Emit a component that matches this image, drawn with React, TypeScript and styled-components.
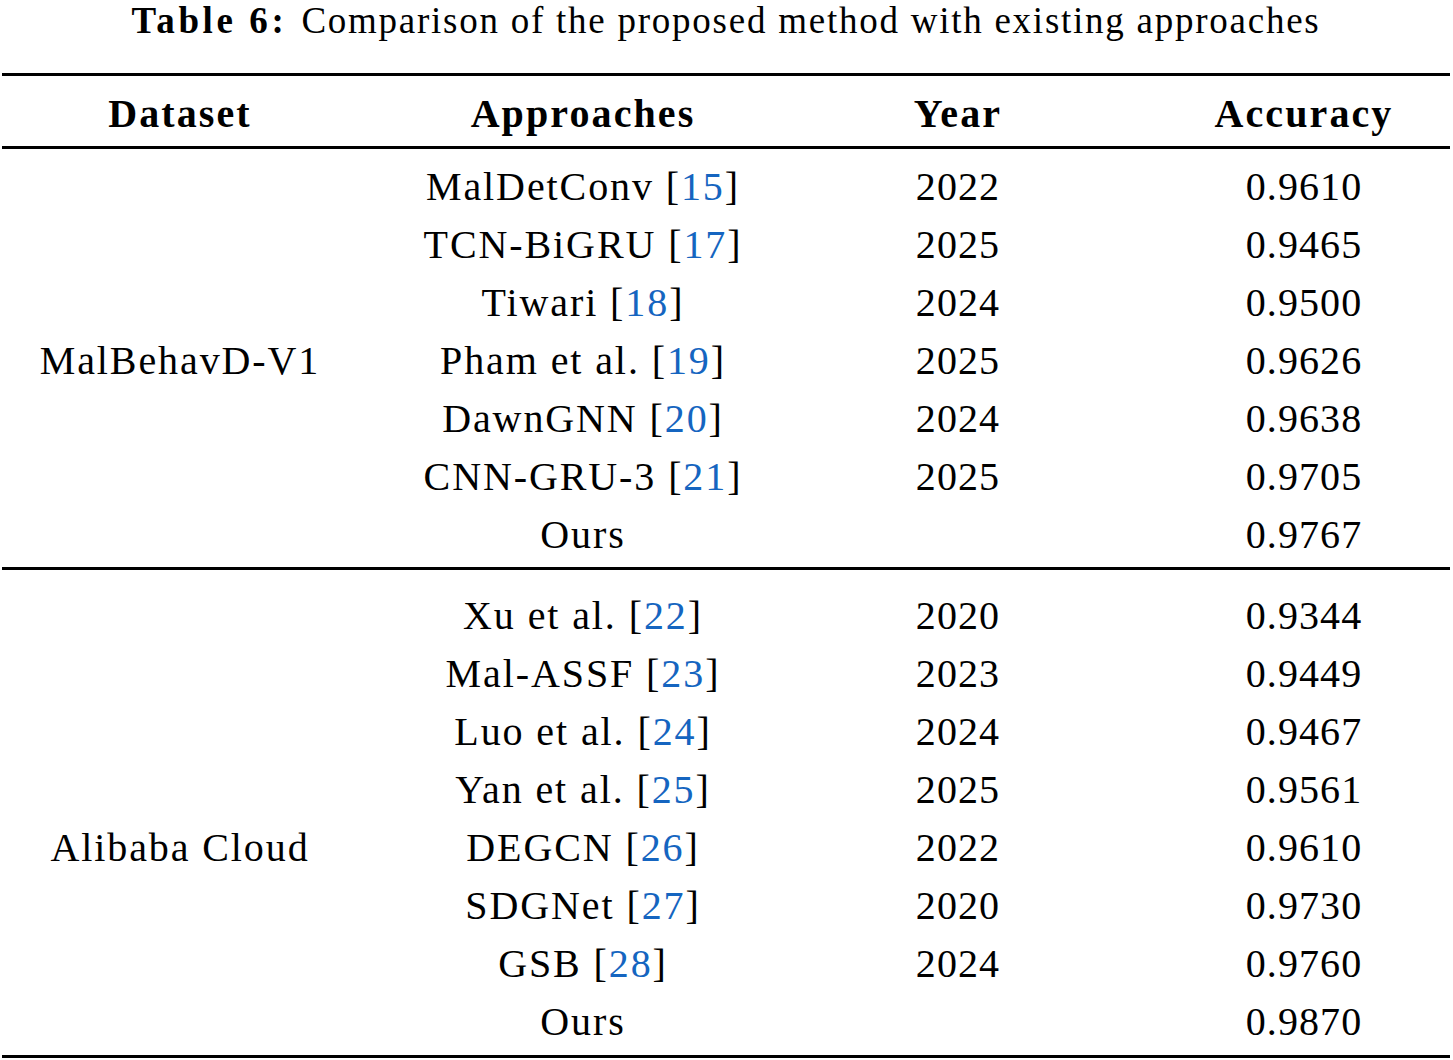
import React from "react";
import styled, { createGlobalStyle } from "styled-components";

const Global = createGlobalStyle`
  html, body { margin: 0; padding: 0; background: #ffffff; }
`;

const Page = styled.div`
  width: 1453px;
  height: 1060px;
  overflow: hidden;
  padding: 0 3px 0 2px;
  box-sizing: border-box;
  font-family: "Liberation Serif", "Times New Roman", serif;
  color: #000;
  font-size: 40px;
`;

const Caption = styled.div`
  text-align: center;
  font-size: 37px;
  line-height: 41px;
  height: 41px;
  margin: 0 0 32px 0;
  white-space: nowrap;
  letter-spacing: 1.75px;
`;

const CaptionLabel = styled.span`
  font-weight: bold;
  letter-spacing: 3.6px;
  margin-right: 14px;
`;

const Rule = styled.div`
  height: 3px;
  background: #000;
`;

const Section = styled.div<{ $top: number; $bottom: number }>`
  padding-top: ${(p) => p.$top}px;
  padding-bottom: ${(p) => p.$bottom}px;
`;

const Row = styled.div<{ $bold?: boolean }>`
  display: grid;
  grid-template-columns: 356px 450px 300px 1fr;
  height: 58px;
  line-height: 58px;
  font-weight: ${(p) => (p.$bold ? "bold" : "normal")};
  letter-spacing: ${(p) => (p.$bold ? "2.1px" : "1.9px")};
  white-space: nowrap;
`;

const Cell = styled.div<{ $shift?: number; $num?: boolean }>`
  text-align: center;
  padding-left: ${(p) => p.$shift ?? 0}px;
  ${(p) => (p.$num ? "letter-spacing: 1.1px;" : "")}
`;

const Ref = styled.span`
  color: #1565c0;
`;

type Item = { name: string; ref?: string; year: string; acc: string; dataset?: string };

const section1: Item[] = [
  { name: "MalDetConv", ref: "15", year: "2022", acc: "0.9610" },
  { name: "TCN-BiGRU", ref: "17", year: "2025", acc: "0.9465" },
  { name: "Tiwari", ref: "18", year: "2024", acc: "0.9500" },
  { name: "Pham et al.", ref: "19", year: "2025", acc: "0.9626", dataset: "MalBehavD-V1" },
  { name: "DawnGNN", ref: "20", year: "2024", acc: "0.9638" },
  { name: "CNN-GRU-3", ref: "21", year: "2025", acc: "0.9705" },
  { name: "Ours", year: "", acc: "0.9767" },
];

const section2: Item[] = [
  { name: "Xu et al.", ref: "22", year: "2020", acc: "0.9344" },
  { name: "Mal-ASSF", ref: "23", year: "2023", acc: "0.9449" },
  { name: "Luo et al.", ref: "24", year: "2024", acc: "0.9467" },
  { name: "Yan et al.", ref: "25", year: "2025", acc: "0.9561" },
  { name: "DEGCN", ref: "26", year: "2022", acc: "0.9610", dataset: "Alibaba Cloud" },
  { name: "SDGNet", ref: "27", year: "2020", acc: "0.9730" },
  { name: "GSB", ref: "28", year: "2024", acc: "0.9760" },
  { name: "Ours", year: "", acc: "0.9870" },
];

const BodyRow = ({ item }: { item: Item }) => (
  <Row>
    <Cell>{item.dataset ?? ""}</Cell>
    <Cell>
      {item.name}
      {item.ref && (
        <>
          {" ["}
          <Ref>{item.ref}</Ref>
          {"]"}
        </>
      )}
    </Cell>
    <Cell $num>{item.year}</Cell>
    <Cell $num $shift={50}>{item.acc}</Cell>
  </Row>
);

export default function App() {
  return (
    <Page>
      <Global />
      <Caption>
        <CaptionLabel>Table 6:</CaptionLabel>Comparison of the proposed method with existing approaches
      </Caption>
      <Rule />
      <Section $top={9} $bottom={3}>
        <Row $bold>
          <Cell>Dataset</Cell>
          <Cell>Approaches</Cell>
          <Cell>Year</Cell>
          <Cell $shift={50}>Accuracy</Cell>
        </Row>
      </Section>
      <Rule />
      <Section $top={9} $bottom={3}>
        {section1.map((it, i) => (
          <BodyRow key={i} item={it} />
        ))}
      </Section>
      <Rule />
      <Section $top={17} $bottom={4}>
        {section2.map((it, i) => (
          <BodyRow key={i} item={it} />
        ))}
      </Section>
      <Rule />
    </Page>
  );
}
